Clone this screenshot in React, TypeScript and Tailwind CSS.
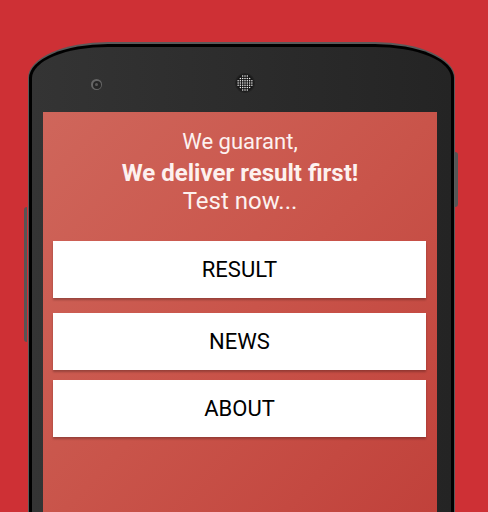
const dots: { x: number; y: number }[] = []
for (let i = -3; i <= 3; i++) {
  for (let j = -3; j <= 3; j++) {
    if (i * i + j * j <= 10) dots.push({ x: 10 + i * 2.3, y: 10 + j * 2.3 })
  }
}

function Speaker() {
  return (
    <svg width="20" height="20" viewBox="0 0 20 20">
      <circle cx="10" cy="10" r="10" fill="#222" />
      <circle cx="10" cy="10" r="8.5" fill="#161616" />
      {dots.map((d, k) => (
        <circle key={k} cx={d.x} cy={d.y} r="0.75" fill="#f0f0f0" />
      ))}
    </svg>
  )
}

function Camera() {
  return (
    <div className="flex h-[11px] w-[11px] items-center justify-center rounded-full bg-[#666]">
      <div className="flex h-[8px] w-[8px] items-center justify-center rounded-full bg-[#262626]">
        <div className="h-[3px] w-[3px] rounded-full bg-[#5a5a5a]" />
      </div>
    </div>
  )
}

const menu = ['RESULT', 'NEWS', 'ABOUT']

export default function App() {
  return (
    <div
      className="relative h-[512px] w-[488px] overflow-hidden bg-[#ce3035] pl-[28px] pt-[42px]"
      style={{ fontFamily: 'Roboto, "Noto Sans", sans-serif' }}
    >
      {/* side keys */}
      <div className="absolute left-[24px] top-[207px] h-[135px] w-[3px] rounded-l-sm bg-[#555]" />
      <div className="absolute left-[455px] top-[152px] h-[55px] w-[3px] rounded-r-sm bg-[#555]" />

      <div className="h-[480px] w-[427px] rounded-tl-[80px_36px] rounded-tr-[80px_36px] bg-[#5a5a5a] px-[1px] pt-[2px]">
        <div className="h-full rounded-tl-[79px_34px] rounded-tr-[79px_34px] bg-black p-[3px]">
          <div className="h-full rounded-tl-[76px_31px] rounded-tr-[76px_31px] bg-gradient-to-r from-[#343434] via-[#2c2c2c] to-[#242424] pl-[11px] pr-[14px]">
            <div className="flex h-[65px] items-start">
              <div className="ml-[48px] mt-[32px]">
                <Camera />
              </div>
              <div className="ml-[133px] mt-[26px]">
                <Speaker />
              </div>
            </div>

            <div className="h-[420px] bg-gradient-to-br from-[#cf665b] via-[#c9544a] to-[#c0403a] pt-[15px]">
              <div className="text-center text-[#fdf1ef]">
                <p className="text-[22px] leading-[30px]">We guarant,</p>
                <p className="text-[24px] font-bold leading-[32px]">We deliver result first!</p>
                <p className="text-[24px] leading-[25px]">Test now...</p>
              </div>

              <div className="mt-[27px] flex flex-col pl-[10px] pr-[11px]">
                {menu.map((m, i) => (
                  <div
                    key={m}
                    className={
                      'flex h-[57px] items-center justify-center bg-white text-[22px] text-black shadow-[0_2px_2px_rgba(0,0,0,0.25)] ' +
                      (i === 1 ? 'mt-[15px]' : i === 2 ? 'mt-[10px]' : '')
                    }
                  >
                    {m}
                  </div>
                ))}
              </div>
            </div>
          </div>
        </div>
      </div>
    </div>
  )
}
